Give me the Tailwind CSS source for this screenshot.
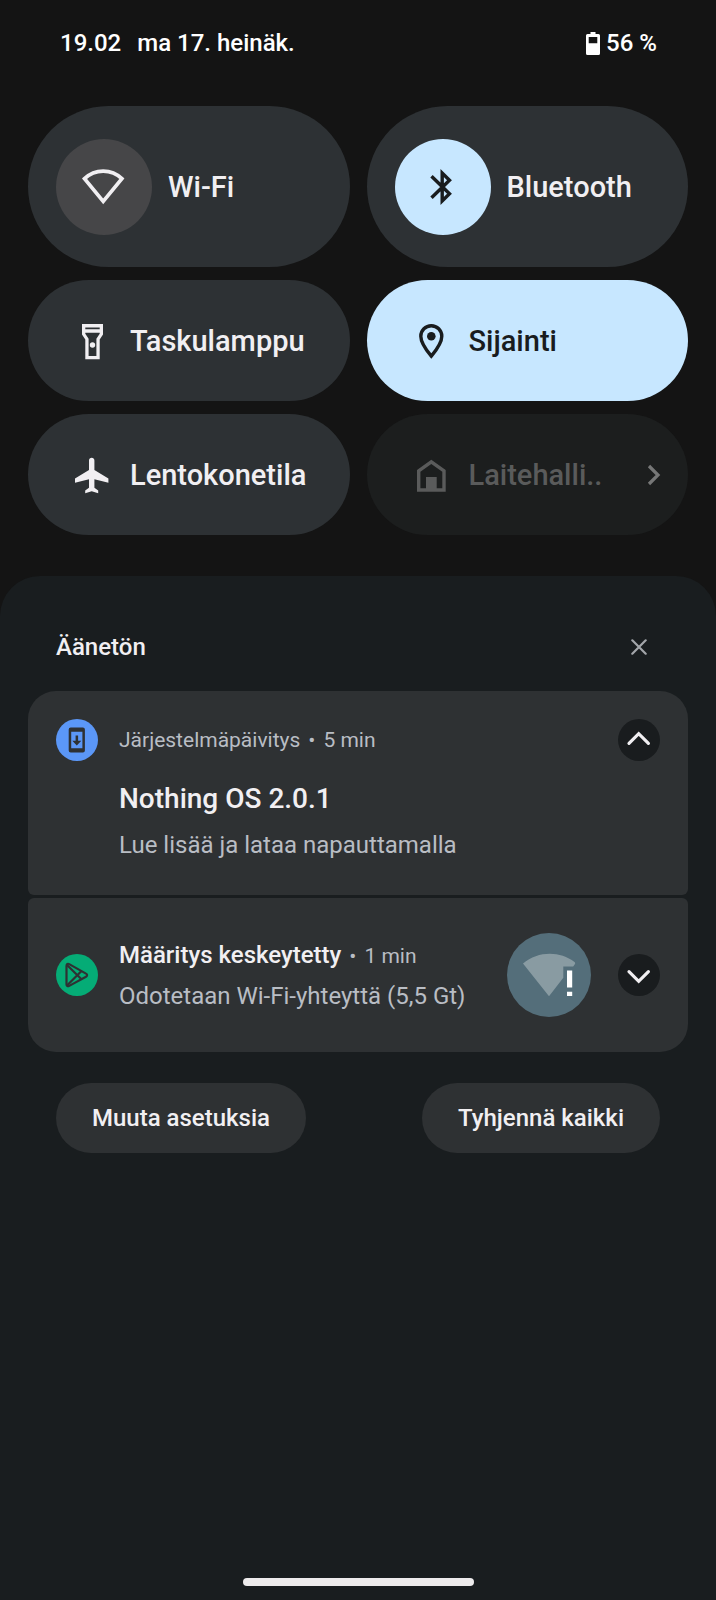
<!DOCTYPE html>
<html lang="fi">

<head>
    <meta charset="UTF-8">
    <meta name="viewport" content="width=device-width, initial-scale=1.0">
    <title>Pika-asetukset</title>
    <script src="https://cdn.jsdelivr.net/npm/@tailwindcss/browser@4"></script>
</head>

<body class="min-h-screen flex flex-col bg-[#141414] text-[#f1eff2] font-['Roboto',sans-serif] font-medium">
    <!-- status bar -->
    <header class="flex items-center justify-between h-[84px] pt-0.5 pl-[60px] pr-[59px] text-2xl text-white">
        <div class="flex gap-4">
            <time>19.02</time>
            <span>ma 17. heinäk.</span>
        </div>
        <div class="flex items-center gap-1.5">
            <svg class="w-[14px] h-[23px]" viewBox="0 0 14 23" fill="currentColor" aria-hidden="true">
                <path fill-rule="evenodd" d="M4.500 0h5v2H12.500a1.500 1.500 0 0 1 1.500 1.500v18a1.500 1.500 0 0 1-1.500 1.500h-11A1.500 1.500 0 0 1 0 21.500v-18A1.500 1.500 0 0 1 1.500 2h3zM2.700 5v6.300h8.600V5z" />
            </svg>
            <span>56 %</span>
        </div>
    </header>

    <!-- quick settings tiles -->
    <section class="grid grid-cols-2 gap-x-[17px] gap-y-[13px] px-7 pt-[22px] pb-[41px] text-[29px]">
        <button class="flex items-center gap-4 h-[161px] pl-7 rounded-full bg-[#2d3134]">
            <span class="flex items-center justify-center w-24 h-24 rounded-full bg-[#464648]">
                <svg class="w-12 h-12" viewBox="0 0 48 48" fill="none" stroke="currentColor" stroke-width="3.7" aria-hidden="true">
                    <path d="M4.500 15.700C15 5.600 31.400 5.600 41.900 15.700L23.200 38.400z" />
                </svg>
            </span>
            <span class="pt-0.5">Wi-Fi</span>
        </button>
        <button class="flex items-center gap-4 h-[161px] pl-7 rounded-full bg-[#2d3134]">
            <span class="flex items-center justify-center w-24 h-24 rounded-full bg-[#c7e7ff] text-[#191c1e]">
                <svg class="w-12 h-12" viewBox="0 0 48 48" fill="none" stroke="currentColor" stroke-width="3.4" aria-hidden="true">
                    <path d="M12.500 13.200L30.500 30.800L23.200 38V10L30.500 17.200L12.500 34.800" />
                </svg>
            </span>
            <span class="pt-0.5">Bluetooth</span>
        </button>
        <button class="flex items-center gap-[18px] h-[121px] pl-11 rounded-full bg-[#2d3134]">
            <svg class="w-10 h-10" viewBox="0 0 40 40" fill="currentColor" aria-hidden="true">
                <path fill-rule="evenodd" d="M10 3h21v10.500l-3.300 5V38.300H13.300V18.500L10 13.500zM13.300 6.500v1.700h14.400V6.500zM13.300 11.800v.9l3.300 5V35h7.800V17.700l3.300-5v-.9z" />
                <circle cx="20.500" cy="24" r="2.700" />
            </svg>
            <span class="pt-0.5">Taskulamppu</span>
        </button>
        <button class="flex items-center gap-[18px] h-[121px] pl-11 rounded-full bg-[#c7e7ff] text-[#191c1e]">
            <svg class="w-10 h-10" viewBox="0 0 40 40" aria-hidden="true">
                <path fill="none" stroke="currentColor" stroke-width="3.4" d="M20.300 35.200C13.500 27 9.800 20.800 9.800 15.200a10.500 10.500 0 0 1 21 0C30.800 20.800 27.100 27 20.300 35.200z" />
                <circle cx="20.300" cy="15.300" r="4.300" fill="currentColor" />
            </svg>
            <span class="pt-0.5">Sijainti</span>
        </button>
        <button class="flex items-center gap-[18px] h-[121px] pl-11 rounded-full bg-[#2d3134]">
            <svg class="w-10 h-10" viewBox="0 0 40 40" fill="currentColor" aria-hidden="true">
                <path d="M17 5.500c0-1.700 1.200-2.700 2.700-2.700s2.700 1 2.700 2.700V15l14 8.500v4.300L22.400 24.200v8.500l3.800 2.900v2.600l-6.500-1.900-6.500 1.900v-2.600l3.800-2.900v-8.500L3 27.800V23.500L17 15z" />
            </svg>
            <span class="pt-0.5">Lentokonetila</span>
        </button>
        <button disabled class="flex items-center gap-[18px] h-[121px] pl-11 pr-[22px] rounded-full bg-[#1c1e1e] text-[#5a5b5b]">
            <svg class="w-10 h-10" viewBox="0 0 40 40" fill="currentColor" aria-hidden="true">
                <path fill-rule="evenodd" d="M20.300 4.700L34.700 15v21.700H6V15zM20.300 8.900L9.400 16.700v16.600h5.600V22h10.700v11.300h5.600V16.700z" />
            </svg>
            <span class="pt-0.5">Laitehalli..</span>
            <svg class="w-6 h-6 ml-auto" viewBox="0 0 24 24" fill="none" stroke="#767777" stroke-width="3.2" aria-hidden="true">
                <path d="M7 3L16 12L7 21" />
            </svg>
        </button>
    </section>

    <!-- notification shade -->
    <main class="grow flex flex-col px-7 pt-[50px] rounded-t-[40px] bg-[#191d1f]">
        <div class="flex items-center justify-between h-[42px] mb-[23px] px-7">
            <h2 class="text-2xl">Äänetön</h2>
            <button class="flex items-center justify-center w-[42px] h-[42px] text-[#a3a6aa]" aria-label="Sulje">
                <svg class="w-4 h-4" viewBox="0 0 16 16" fill="none" stroke="currentColor" stroke-width="2.2" stroke-linecap="round" aria-hidden="true">
                    <path d="M1.300 1.300L14.700 14.700M14.700 1.300L1.300 14.700" />
                </svg>
            </button>
        </div>

        <article class="px-7 pt-7 pb-8 mb-[3px] rounded-t-[28px] rounded-b-md bg-[#2e3133]">
            <div class="flex items-center">
                <svg class="w-[42px] h-[42px] mr-[21px]" viewBox="0 0 42 42" aria-hidden="true">
                    <circle cx="21" cy="21" r="21" fill="#5b97f7" />
                    <path fill="#2e3133" fill-rule="evenodd" d="M14.700 8.500h12.200a2 2 0 0 1 2 2v21a2 2 0 0 1-2 2H14.700a2 2 0 0 1-2-2v-21a2 2 0 0 1 2-2zM15.200 12.700v16.600h11.200V12.700z" />
                    <path fill="#2e3133" d="M19.600 16.500h2.500v5.200h3.200l-4.500 4.700-4.500-4.700h3.300z" />
                </svg>
                <p class="flex gap-2 pt-0.5 text-[21px] font-normal text-[#b9bdc4]">
                    <span>Järjestelmäpäivitys</span>
                    <span>•</span>
                    <span>5 min</span>
                </p>
                <button class="ml-auto rounded-full bg-[#191c1e]" aria-label="Tiivistä">
                    <svg class="w-[42px] h-[42px]" viewBox="0 0 42 42" fill="none" stroke="currentColor" stroke-width="3.2" stroke-linecap="round" aria-hidden="true">
                        <path d="M11 24.400L20.700 14.700L30.400 24.400" />
                    </svg>
                </button>
            </div>
            <div class="pl-[63px]">
                <h3 class="mt-5 text-[28px] leading-9">Nothing OS 2.0.1</h3>
                <p class="mt-2.5 text-2xl leading-9 font-normal text-[#b9bdc4]">Lue lisää ja lataa napauttamalla</p>
            </div>
        </article>

        <article class="flex items-center h-[154px] px-7 rounded-t-md rounded-b-[28px] bg-[#2e3133]">
            <svg class="w-[42px] h-[42px] mr-[21px]" viewBox="0 0 42 42" aria-hidden="true">
                <circle cx="21" cy="21" r="21" fill="#05ac76" />
                <g fill="none" stroke="#2e3133" stroke-width="2.200" stroke-linejoin="round">
                    <path d="M10.500 12v18.500c0 1.600 1.300 2.200 2.700 1.400L30 22.700c1.500-.9 1.500-2.300 0-3.100L13.200 10.100c-1.400-.8-2.700-.1-2.700 1.900z" />
                    <path d="M11 11L25.500 25.300M11 31.500L25.500 17" />
                </g>
            </svg>
            <div>
                <div class="flex items-baseline gap-2 text-[21px] leading-10 font-normal text-[#b9bdc4]">
                    <h3 class="text-2xl leading-10 font-medium text-[#f1eff2]">Määritys keskeytetty</h3>
                    <span>•</span>
                    <span>1 min</span>
                </div>
                <p class="text-2xl leading-10 font-normal text-[#b9bdc4]">Odotetaan Wi-Fi-yhteyttä (5,5 Gt)</p>
            </div>
            <svg class="w-[84px] h-[84px] ml-auto mr-[27px]" viewBox="0 0 84 84" aria-hidden="true">
                <circle cx="42" cy="42" r="42" fill="#546e7a" />
                <path fill="#899ba2" d="M16 30.500C31 17.800 53 17.800 67.500 29c.8.7.9 1.400.3 2.200l-1.600 2.300H56.300v11.300L42 63.300z" />
                <path fill="#fff" d="M60 37.500h5.200v17H60zM60 58.700h5.200V63H60z" />
            </svg>
            <button class="rounded-full bg-[#191c1e]" aria-label="Laajenna">
                <svg class="w-[42px] h-[42px]" viewBox="0 0 42 42" fill="none" stroke="currentColor" stroke-width="3.2" stroke-linecap="round" aria-hidden="true">
                    <path d="M11 17.600L20.700 27.300L30.400 17.600" />
                </svg>
            </button>
        </article>

        <div class="flex justify-between mt-[31px] px-7 text-2xl">
            <button class="h-[70px] px-9 rounded-full bg-[#2e3133]">Muuta asetuksia</button>
            <button class="h-[70px] px-9 rounded-full bg-[#2e3133]">Tyhjennä kaikki</button>
        </div>

        <!-- gesture bar -->
        <div class="w-[231px] h-2 mt-auto mb-[14px] mx-auto rounded-full bg-[#edebec]"></div>
    </main>
</body>

</html>
